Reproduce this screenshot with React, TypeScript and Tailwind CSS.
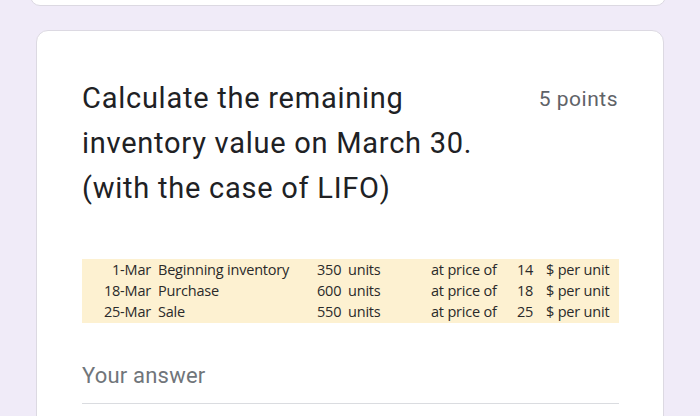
export default function App() {
  const rows = [
    ["1-Mar", "Beginning inventory", "350", "14"],
    ["18-Mar", "Purchase", "600", "18"],
    ["25-Mar", "Sale", "550", "25"],
  ];
  return (
    <div className="w-[700px] h-[416px] overflow-hidden bg-[#f0ebf8] relative" style={{ fontFamily: "Roboto, 'Noto Sans', sans-serif" }}>
      <div className="absolute left-[30px] top-[-40px] w-[636px] h-[46px] bg-white rounded-[10px] border border-[#dcd9e2]" />
      <div className="absolute left-[36px] top-[30px] w-[628px] h-[420px] bg-white rounded-[12px] border border-[#dcd9e2] pl-[45px] pr-[45px] pt-[45px]">
        <div className="flex justify-between">
          <div className="text-[29px] leading-[45px] text-[#202124] tracking-[0.75px]">
            Calculate the remaining
            <br />
            inventory value on March 30.
            <br />
            (with the case of LIFO)
          </div>
          <div className="text-[21px] leading-[30px] text-[#5f6368] pt-[8px] tracking-[0.5px]">5 points</div>
        </div>
        <div className="mt-[48px] w-[537px] h-[64px] bg-[#fdf1d1] pt-[0px] text-[14.5px] leading-[21px] text-[#2a2a2a]" style={{ fontFamily: "'Open Sans', 'Liberation Sans', sans-serif" }}>
          {rows.map((r) => (
            <div key={r[0]} className="flex tracking-[-0.2px]">
              <div className="w-[69px] text-right">{r[0]}</div>
              <div className="w-[166px] pl-[7px]">{r[1]}</div>
              <div className="w-[30px]">{r[2]}</div>
              <div className="w-[84px] pl-[1px]">units</div>
              <div className="w-[86px]">at price of</div>
              <div className="w-[29px]">{r[3]}</div>
              <div>$ per unit</div>
            </div>
          ))}
        </div>
        <div className="mt-[38px] text-[22px] leading-[30px] text-[#70757a] tracking-[0.2px]">Your answer</div>
        <div className="mt-[12px] w-[537px] h-[1px] bg-[#dadce0]" />
      </div>
    </div>
  );
}
